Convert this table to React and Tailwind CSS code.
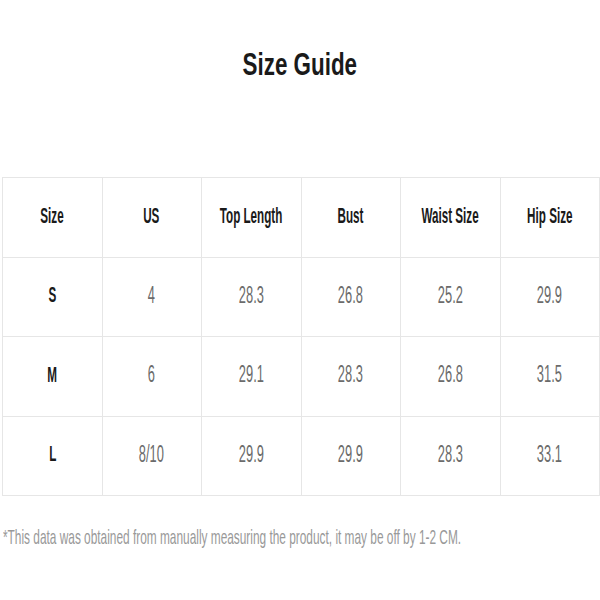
export default function App() {
  const headers = ["Size", "US", "Top Length", "Bust", "Waist Size", "Hip Size"];
  const rows = [
    ["S", "4", "28.3", "26.8", "25.2", "29.9"],
    ["M", "6", "29.1", "28.3", "26.8", "31.5"],
    ["L", "8/10", "29.9", "29.9", "28.3", "33.1"],
  ];
  const f = { fontFamily: '"Liberation Sans", Arial, sans-serif' };
  return (
    <div className="w-[600px] h-[600px] bg-white relative overflow-hidden" style={f}>
      <div className="h-[128px] pt-[44px] flex justify-center">
        <span className="inline-block text-[32px] leading-[40px] font-bold text-[#1a1a1a] scale-x-[0.7] whitespace-nowrap">Size Guide</span>
      </div>
      <div className="mt-[49px] ml-[2px] w-[598px] grid grid-cols-6 border-l border-t border-[#e6e6e6]">
        {headers.map((h) => (
          <div key={h} className="h-[79.5px] pb-[3px] border-r border-b border-[#e6e6e6] flex items-center justify-center">
            <span className="inline-block text-[22px] font-bold text-[#1a1a1a] scale-x-[0.53] whitespace-nowrap">{h}</span>
          </div>
        ))}
        {rows.map((r) =>
          r.map((c, i) => (
            <div key={r[0] + i} className="h-[79.5px] pb-[4px] border-r border-b border-[#e6e6e6] flex items-center justify-center">
              <span className={"inline-block whitespace-nowrap " + (i === 0 ? "text-[22px] scale-x-[0.53] font-bold text-[#1a1a1a]" : "text-[23px] scale-x-[0.56] text-[#6b6b6b]")}>{c}</span>
            </div>
          ))
        )}
      </div>
      <div className="mt-[25px] pl-[3px]">
        <span className="inline-block origin-left text-[21px] text-[#999999] scale-x-[0.565] whitespace-nowrap">*This data was obtained from manually measuring the product, it may be off by 1-2 CM.</span>
      </div>
    </div>
  );
}
